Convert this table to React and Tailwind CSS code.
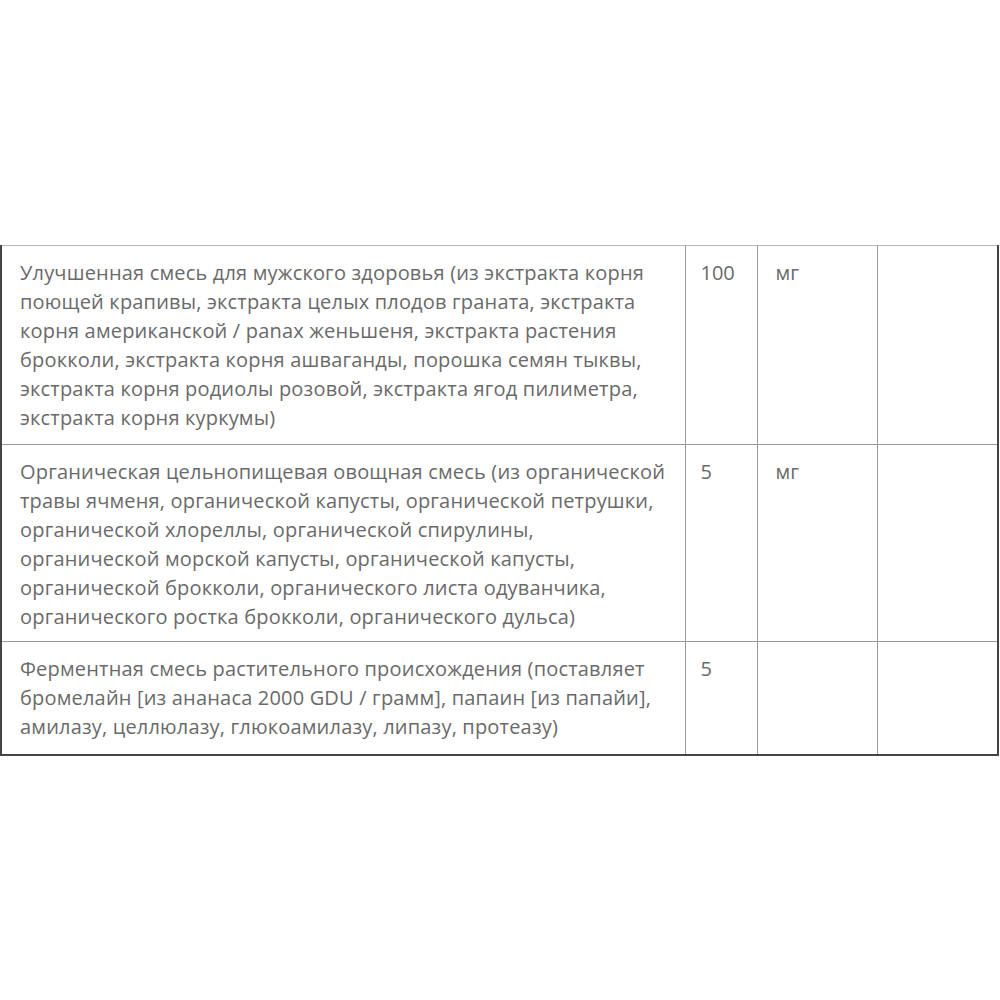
import React from "react";

const rows = [
    {
        lines: [
            "Улучшенная смесь для мужского здоровья (из экстракта корня",
            "поющей крапивы, экстракта целых плодов граната, экстракта",
            "корня американской / panax женьшеня, экстракта растения",
            "брокколи, экстракта корня ашваганды, порошка семян тыквы,",
            "экстракта корня родиолы розовой, экстракта ягод пилиметра,",
            "экстракта корня куркумы)",
        ],
        amount: "100",
        unit: "мг",
        h: "h-[199px]",
    },
    {
        lines: [
            "Органическая цельнопищевая овощная смесь (из органической",
            "травы ячменя, органической капусты, органической петрушки,",
            "органической хлореллы, органической спирулины,",
            "органической морской капусты, органической капусты,",
            "органической брокколи, органического листа одуванчика,",
            "органического ростка брокколи, органического дульса)",
        ],
        amount: "5",
        unit: "мг",
        h: "h-[197px]",
    },
    {
        lines: [
            "Ферментная смесь растительного происхождения (поставляет",
            "бромелайн [из ананаса 2000 GDU / грамм], папаин [из папайи],",
            "амилазу, целлюлазу, глюкоамилазу, липазу, протеазу)",
        ],
        amount: "5",
        unit: "",
        h: "h-[113px]",
    },
];

const App = () => {
    return (
        <div className="w-[1000px] h-[1000px] bg-white pt-[245px] font-['Open_Sans',sans-serif] text-[#6a6a6a]">
            <table className="w-[999px] border-collapse table-fixed border-t border-t-[#b5b5b5] border-l-2 border-l-[#444] border-r-2 border-r-[#444] border-b-2 border-b-[#444]">
                <colgroup>
                    <col className="w-[684px]" />
                    <col className="w-[72px]" />
                    <col className="w-[120px]" />
                    <col />
                </colgroup>
                <tbody>
                    {rows.map((row, i) => (
                        <tr key={i} className="border-b border-[#999] last:border-b-0 align-top">
                            <td className={`${row.h} pl-[18px] pt-[12px] text-[20px] leading-[29px] tracking-[0.18px] whitespace-nowrap`}>
                                {row.lines.map((line, j) => (
                                    <div key={j}>{line}</div>
                                ))}
                            </td>
                            <td className="border-l border-[#999] pl-[15px] pt-[12px] text-[20px] leading-[29px]">
                                {row.amount}
                            </td>
                            <td className="border-l border-[#999] pl-[18px] pt-[12px] text-[20px] leading-[29px]">
                                {row.unit}
                            </td>
                            <td className="border-l border-[#999]"></td>
                        </tr>
                    ))}
                </tbody>
            </table>
        </div>
    );
};

export default App;
